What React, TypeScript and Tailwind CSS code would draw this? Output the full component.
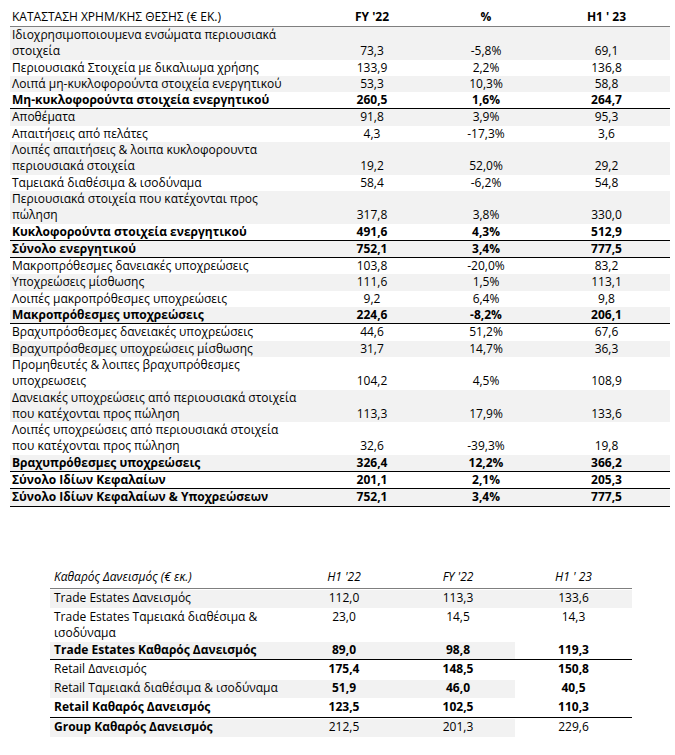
import React from "react";

type Row = {
  label: React.ReactNode;
  fy: string;
  pct: string;
  h1: string;
  bold?: boolean;
  lines?: number;
  rule?: boolean;
};

const rows: Row[] = [
  { label: <>Ιδιοχρησιμοποιουμενα ενσώματα περιουσιακά<br />στοιχεία</>, fy: "73,3", pct: "-5,8%", h1: "69,1", lines: 2 },
  { label: "Περιουσιακά Στοιχεία με δικαλιωμα χρήσης", fy: "133,9", pct: "2,2%", h1: "136,8" },
  { label: "Λοιπά μη-κυκλοφορούντα στοιχεία ενεργητικού", fy: "53,3", pct: "10,3%", h1: "58,8" },
  { label: "Μη-κυκλοφορούντα στοιχεία ενεργητικού", fy: "260,5", pct: "1,6%", h1: "264,7", bold: true, rule: true },
  { label: "Αποθέματα", fy: "91,8", pct: "3,9%", h1: "95,3" },
  { label: "Απαιτήσεις από πελάτες", fy: "4,3", pct: "-17,3%", h1: "3,6" },
  { label: <>Λοιπές απαιτήσεις &amp; λοιπα κυκλοφορουντα<br />περιουσιακά στοιχεία</>, fy: "19,2", pct: "52,0%", h1: "29,2", lines: 2 },
  { label: "Ταμειακά διαθέσιμα & ισοδύναμα", fy: "58,4", pct: "-6,2%", h1: "54,8" },
  { label: <>Περιουσιακά στοιχεία που κατέχονται προς<br />πώληση</>, fy: "317,8", pct: "3,8%", h1: "330,0", lines: 2 },
  { label: "Κυκλοφορούντα στοιχεία ενεργητικού", fy: "491,6", pct: "4,3%", h1: "512,9", bold: true, rule: true },
  { label: "Σύνολο ενεργητικού", fy: "752,1", pct: "3,4%", h1: "777,5", bold: true, rule: true },
  { label: "Μακροπρόθεσμες δανειακές υποχρεώσεις", fy: "103,8", pct: "-20,0%", h1: "83,2" },
  { label: "Υποχρεώσεις μίσθωσης", fy: "111,6", pct: "1,5%", h1: "113,1" },
  { label: "Λοιπές μακροπρόθεσμες υποχρεώσεις", fy: "9,2", pct: "6,4%", h1: "9,8" },
  { label: "Μακροπρόθεσμες υποχρεώσεις", fy: "224,6", pct: "-8,2%", h1: "206,1", bold: true, rule: true },
  { label: "Βραχυπρόσθεσμες δανειακές υποχρεώσεις", fy: "44,6", pct: "51,2%", h1: "67,6" },
  { label: "Βραχυπρόσθεσμες υποχρεώσεις μίσθωσης", fy: "31,7", pct: "14,7%", h1: "36,3" },
  { label: <>Προμηθευτές &amp; λοιπες βραχυπρόθεσμες<br />υποχρεωσεις</>, fy: "104,2", pct: "4,5%", h1: "108,9", lines: 2 },
  { label: <>Δανειακές υποχρεώσεις από περιουσιακά στοιχεία<br />που κατέχονται προς πώληση</>, fy: "113,3", pct: "17,9%", h1: "133,6", lines: 2 },
  { label: <>Λοιπές υποχρεώσεις από περιουσιακά στοιχεία<br />που κατέχονται προς πώληση</>, fy: "32,6", pct: "-39,3%", h1: "19,8", lines: 2 },
  { label: "Βραχυπρόθεσμες υποχρεώσεις", fy: "326,4", pct: "12,2%", h1: "366,2", bold: true, rule: true },
  { label: "Σύνολο Ιδίων Κεφαλαίων", fy: "201,1", pct: "2,1%", h1: "205,3", bold: true, rule: true },
  { label: "Σύνολο Ιδίων Κεφαλαίων & Υποχρεώσεων", fy: "752,1", pct: "3,4%", h1: "777,5", bold: true, rule: true },
];

type DebtRow = {
  label: React.ReactNode;
  values: string[];
  boldLabel?: boolean;
  boldValues?: boolean;
  gray?: boolean;
  lastWhite?: boolean;
  height: string;
  rule?: boolean;
};

const debtRows: DebtRow[] = [
  { label: "Trade Estates Δανεισμός", values: ["112,0", "113,3", "133,6"], gray: true, height: "h-[19px]" },
  { label: <>Trade Estates Ταμειακά διαθέσιμα &amp;<br />ισοδύναμα</>, values: ["23,0", "14,5", "14,3"], height: "h-[33px]" },
  { label: "Trade Estates Καθαρός Δανεισμός", values: ["89,0", "98,8", "119,3"], boldLabel: true, boldValues: true, gray: true, lastWhite: true, height: "h-[19px]", rule: true },
  { label: "Retail Δανεισμός", values: ["175,4", "148,5", "150,8"], boldValues: true, height: "h-[19px]" },
  { label: "Retail Ταμειακά διαθέσιμα & ισοδύναμα", values: ["51,9", "46,0", "40,5"], boldValues: true, gray: true, lastWhite: true, height: "h-[19px]" },
  { label: "Retail Καθαρός Δανεισμός", values: ["123,5", "102,5", "110,3"], boldLabel: true, boldValues: true, height: "h-[20px]", rule: true },
  { label: "Group Καθαρός Δανεισμός", values: ["212,5", "201,3", "229,6"], boldLabel: true, gray: true, lastWhite: true, height: "h-[19px]" },
];

function BalanceTable() {
  return (
    <div className="ml-[10px] w-[660px] text-[12px] text-black">
      <div className="grid grid-cols-[305px_114px_114px_1fr] h-[24px] items-center pt-[4px] border-b border-[#7f7f7f]">
        <span className="pl-[2px]">ΚΑΤΑΣΤΑΣΗ ΧΡΗΜ/ΚΗΣ ΘΕΣΗΣ (€ ΕΚ.)</span>
        <span className="text-center font-bold">FY '22</span>
        <span className="text-center font-bold">%</span>
        <span className="text-center font-bold">H1 ' 23</span>
      </div>
      {rows.map((row, i) => (
        <div
          key={i}
          className={`grid grid-cols-[305px_114px_114px_1fr] items-end leading-[16.3px] ${
            i % 2 === 0 ? "bg-[#f2f2f2]" : "bg-white"
          } ${row.bold ? "font-bold" : ""} ${row.rule ? "border-b border-black" : ""}`}
        >
          <span className="pl-[2px] whitespace-nowrap">{row.label}</span>
          <span className="text-center">{row.fy}</span>
          <span className="text-center">{row.pct}</span>
          <span className="text-center">{row.h1}</span>
        </div>
      ))}
    </div>
  );
}

function DebtTable() {
  return (
    <div className="ml-[50px] mt-[61px] w-[582px] text-[12px] text-black">
      <div className="grid grid-cols-[237px_114px_114px_1fr] h-[21px] items-end pb-[2px] border-b border-[#7f7f7f] italic">
        <span className="pl-[4px]">Καθαρός Δανεισμός (€ εκ.)</span>
        <span className="text-center">H1 '22</span>
        <span className="text-center">FY '22</span>
        <span className="text-center">H1 ' 23</span>
      </div>
      {debtRows.map((row, i) => (
        <div
          key={i}
          className={`grid grid-cols-[237px_114px_114px_1fr] items-start leading-[16px] pt-[1px] ${row.height} ${
            row.rule ? "border-b border-black" : ""
          }`}
        >
          <span className={`h-full pl-[4px] whitespace-nowrap ${row.gray ? "bg-[#f2f2f2]" : ""} ${row.boldLabel ? "font-bold" : ""}`}>
            {row.label}
          </span>
          {row.values.map((v, j) => (
            <span
              key={j}
              className={`h-full text-center ${row.gray && !(row.lastWhite && j === 2) ? "bg-[#f2f2f2]" : ""} ${
                row.boldValues ? "font-bold" : ""
              }`}
            >
              {v}
            </span>
          ))}
        </div>
      ))}
    </div>
  );
}

export default function App() {
  return (
    <div className="w-[675px] h-[755px] bg-white pt-[3px] font-['Open_Sans',sans-serif]">
      <BalanceTable />
      <DebtTable />
    </div>
  );
}
